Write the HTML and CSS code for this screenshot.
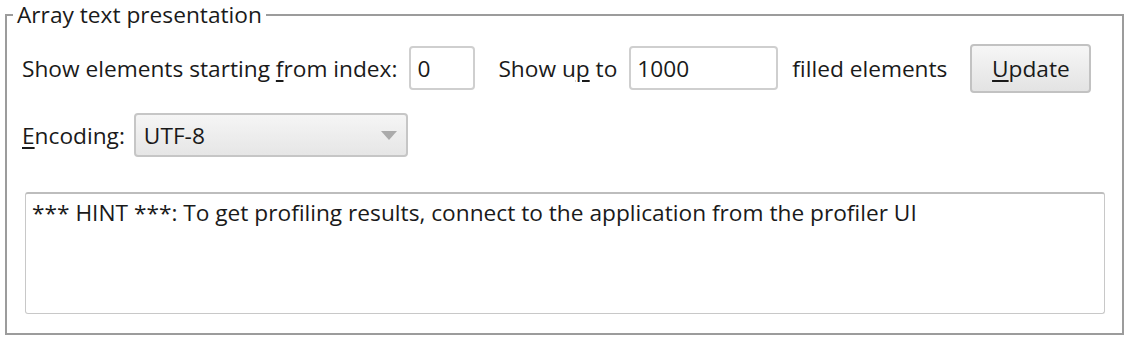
FILE: index.html
```html
<!DOCTYPE html>
<html>
<head>
<meta charset="utf-8">
<link rel="stylesheet" href="styles.css">
</head>
<body>
<fieldset class="group">
  <legend class="group-title">Array text presentation</legend>
  <div class="content">
    <div class="row row-range">
      <span class="label">Show elements starting <u>f</u>rom index:</span>
      <div class="field field-index">0</div>
      <span class="label label-upto">Show u<u>p</u> to</span>
      <div class="field field-count">1000</div>
      <span class="label label-filled">filled elements</span>
      <button class="btn"><u>U</u>pdate</button>
    </div>
    <div class="row row-encoding">
      <span class="label"><u>E</u>ncoding:</span>
      <div class="combo">
        <span class="combo-value">UTF-8</span>
        <svg class="combo-arrow" width="16" height="9" viewBox="0 0 16 9"><path d="M0 0 H16 L8 9 Z" fill="#ababab"/></svg>
      </div>
    </div>
    <div class="output">*** HINT ***: To get profiling results, connect to the application from the profiler UI</div>
  </div>
</fieldset>
</body>
</html>
```

FILE: styles.css
```css
html, body {
  margin: 0;
  padding: 0;
  background: #ffffff;
}

body {
  font-family: "Open Sans", "Noto Sans", sans-serif;
  font-size: 22.7px;
  color: #1a1a1a;
}

.group {
  box-sizing: border-box;
  margin: 0 0 0 5px;
  width: 1119px;
  height: 335px;
  border: 2px solid #9c9c9c;
  padding: 0;
}

.group-title {
  margin-left: 6px;
  padding: 0 4px;
  line-height: 30px;
  font-size: 22.7px;
  color: #1a1a1a;
}

.content {
  padding: 0 0 0 15px;
}

.row {
  display: flex;
  align-items: center;
}

.row-range {
  margin-top: 14px;
  height: 48px;
}

.row-encoding {
  margin-top: 21px;
  height: 44px;
}

.label u {
  text-decoration-thickness: 2px;
  text-underline-offset: 3px;
}

.field {
  box-sizing: border-box;
  height: 44px;
  border: 2px solid #cfcfcf;
  border-radius: 4px;
  padding: 0 6px;
  display: flex;
  align-items: center;
  background: #fff;
}

.field-index {
  width: 66px;
  margin-left: 12px;
}

.label-upto {
  margin-left: 23px;
}

.field-count {
  width: 149px;
  margin-left: 12px;
}

.label-filled {
  margin-left: 14px;
}

.btn {
  box-sizing: border-box;
  margin-left: 23px;
  width: 121px;
  height: 49px;
  border: 2px solid #c2c2c2;
  border-radius: 4px;
  background: linear-gradient(#f6f6f6, #e3e3e3);
  font: inherit;
  color: #1a1a1a;
  padding: 0;
}

.btn u {
  text-decoration-thickness: 2px;
  text-underline-offset: 3px;
}

.combo {
  box-sizing: border-box;
  margin-left: 9px;
  width: 274px;
  height: 44px;
  border: 2px solid #c6c6c6;
  border-radius: 4px;
  background: linear-gradient(#f5f5f5, #e6e6e6);
  display: flex;
  align-items: center;
  justify-content: space-between;
  padding: 0 9px 0 8px;
}

.output {
  box-sizing: border-box;
  margin: 35px 0 0 3px;
  width: 1080px;
  height: 122px;
  border: 1px solid #c8c8c8;
  border-top: 2px solid #bdbdbd;
  border-radius: 3px;
  padding: 4px 6px;
  line-height: 30px;
}
```
